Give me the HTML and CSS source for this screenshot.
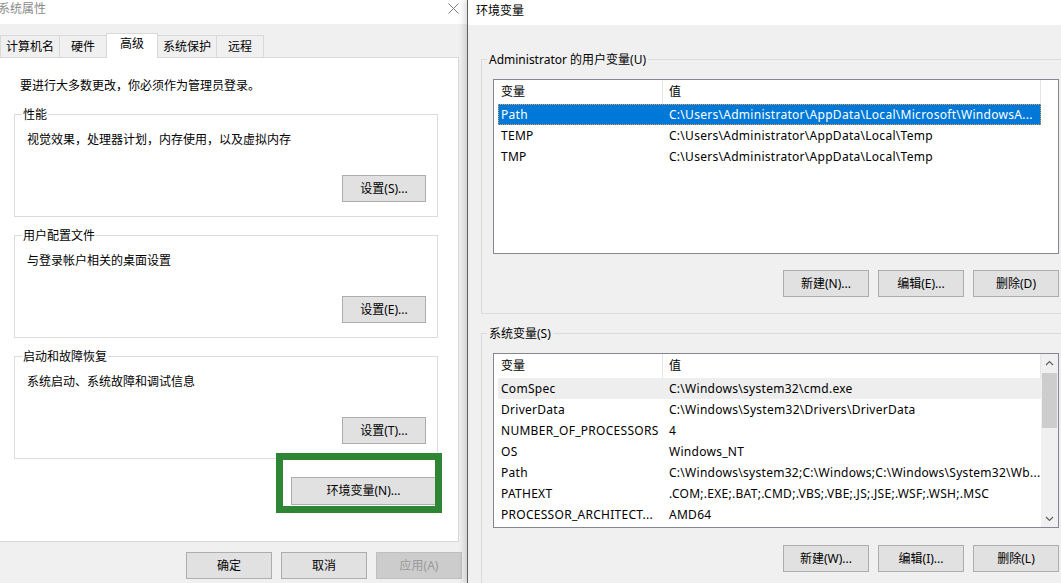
FILE: index.html
```html
<!DOCTYPE html>
<html lang="zh-CN">
<head>
    <meta charset="UTF-8">
    <meta name="viewport" content="width=device-width, initial-scale=1.0">
    <title>系统属性 - 环境变量</title>
    <link rel="stylesheet" href="styles.css">
</head>
<body>
    <div class="desk">
        <!-- 系统属性（后面的窗口） -->
        <div class="dlg-sys">
            <div class="titlebar">
                <span class="title inactive">系统属性</span>
                <svg class="close" width="11" height="11" viewBox="0 0 11 11">
                    <path d="M0.5 0.5 L10.5 10.5 M10.5 0.5 L0.5 10.5" stroke="#7a7a7a" stroke-width="1" fill="none"/>
                </svg>
            </div>

            <div class="tabs">
                <div class="tab">计算机名</div>
                <div class="tab">硬件</div>
                <div class="tab active">高级</div>
                <div class="tab">系统保护</div>
                <div class="tab">远程</div>
            </div>

            <div class="panel">
                <p class="note">要进行大多数更改，你必须作为管理员登录。</p>

                <fieldset class="group">
                    <legend>性能</legend>
                    <p class="desc">视觉效果，处理器计划，内存使用，以及虚拟内存</p>
                    <div class="actions"><button class="btn btn-set">设置(S)...</button></div>
                </fieldset>

                <fieldset class="group">
                    <legend>用户配置文件</legend>
                    <p class="desc">与登录帐户相关的桌面设置</p>
                    <div class="actions"><button class="btn btn-set">设置(E)...</button></div>
                </fieldset>

                <fieldset class="group">
                    <legend>启动和故障恢复</legend>
                    <p class="desc">系统启动、系统故障和调试信息</p>
                    <div class="actions"><button class="btn btn-set">设置(T)...</button></div>
                </fieldset>

                <div class="env-row"><button class="btn btn-env">环境变量(N)...</button></div>
                <div class="mark"></div>
            </div>

            <div class="footer">
                <button class="btn">确定</button>
                <button class="btn">取消</button>
                <button class="btn" disabled>应用(A)</button>
            </div>
        </div>

        <!-- 环境变量（当前窗口） -->
        <div class="dlg-env">
            <div class="titlebar-env">环境变量</div>

            <div class="env-body">
                <fieldset class="env-group user">
                    <legend>Administrator 的用户变量(U)</legend>
                    <div class="list user-list">
                        <div class="list-main">
                            <div class="head">
                                <div class="cell c1">变量</div>
                                <div class="cell c2">值</div>
                            </div>
                            <div class="row selected">
                                <div class="cell c1">Path</div>
                                <div class="cell c2">C:\Users\Administrator\AppData\Local\Microsoft\WindowsA...</div>
                            </div>
                            <div class="row">
                                <div class="cell c1">TEMP</div>
                                <div class="cell c2">C:\Users\Administrator\AppData\Local\Temp</div>
                            </div>
                            <div class="row">
                                <div class="cell c1">TMP</div>
                                <div class="cell c2">C:\Users\Administrator\AppData\Local\Temp</div>
                            </div>
                        </div>
                    </div>
                    <div class="list-actions">
                        <button class="btn">新建(N)...</button>
                        <button class="btn">编辑(E)...</button>
                        <button class="btn">删除(D)</button>
                    </div>
                </fieldset>

                <fieldset class="env-group system">
                    <legend>系统变量(S)</legend>
                    <div class="list sys-list">
                        <div class="list-main">
                            <div class="head">
                                <div class="cell c1">变量</div>
                                <div class="cell c2">值</div>
                            </div>
                            <div class="row hover">
                                <div class="cell c1">ComSpec</div>
                                <div class="cell c2">C:\Windows\system32\cmd.exe</div>
                            </div>
                            <div class="row">
                                <div class="cell c1">DriverData</div>
                                <div class="cell c2">C:\Windows\System32\Drivers\DriverData</div>
                            </div>
                            <div class="row">
                                <div class="cell c1">NUMBER_OF_PROCESSORS</div>
                                <div class="cell c2">4</div>
                            </div>
                            <div class="row">
                                <div class="cell c1">OS</div>
                                <div class="cell c2">Windows_NT</div>
                            </div>
                            <div class="row">
                                <div class="cell c1">Path</div>
                                <div class="cell c2">C:\Windows\system32;C:\Windows;C:\Windows\System32\Wb...</div>
                            </div>
                            <div class="row">
                                <div class="cell c1">PATHEXT</div>
                                <div class="cell c2">.COM;.EXE;.BAT;.CMD;.VBS;.VBE;.JS;.JSE;.WSF;.WSH;.MSC</div>
                            </div>
                            <div class="row">
                                <div class="cell c1">PROCESSOR_ARCHITECT...</div>
                                <div class="cell c2">AMD64</div>
                            </div>
                        </div>
                        <div class="scrollbar">
                            <div class="arrow">
                                <svg width="9" height="6" viewBox="0 0 9 6"><path d="M1 5 L4.5 1.5 L8 5" stroke="#606060" stroke-width="1.2" fill="none"/></svg>
                            </div>
                            <div class="thumb"></div>
                            <div class="track"></div>
                            <div class="arrow">
                                <svg width="9" height="6" viewBox="0 0 9 6"><path d="M1 1 L4.5 4.5 L8 1" stroke="#606060" stroke-width="1.2" fill="none"/></svg>
                            </div>
                        </div>
                    </div>
                    <div class="list-actions">
                        <button class="btn">新建(W)...</button>
                        <button class="btn">编辑(I)...</button>
                        <button class="btn">删除(L)</button>
                    </div>
                </fieldset>
            </div>
        </div>
    </div>
</body>
</html>
```

FILE: styles.css
```css
* { margin: 0; padding: 0; box-sizing: border-box; }
body {
    width: 1061px;
    height: 583px;
    overflow: hidden;
    background: #f0f0f0;
    font-family: "Noto Sans", "Noto Sans CJK SC", sans-serif;
    font-size: 12px;
    color: #000;
}
.desk { display: flex; height: 583px; }

/* buttons */
.btn {
    height: 27px;
    border: 1px solid #adadad;
    background: #e1e1e1;
    font: inherit;
    color: #000;
    line-height: 25px;
    text-align: center;
}
.btn:disabled {
    background: #cccccc;
    border-color: #bfbfbf;
    color: #9a9a9a;
}

/* ---- 系统属性 ---- */
.dlg-sys { width: 467px; flex: none; background: #f0f0f0; }
.titlebar {
    height: 24px;
    background: #fff;
    display: flex;
    align-items: flex-start;
}
.title { margin-left: -2px; padding-top: 1px; line-height: 16px; }
.title.inactive { color: #8a8a8a; }
.close { margin: 3px 8px 0 auto; }

.tabs {
    display: flex;
    align-items: flex-end;
    height: 24px;
    margin-top: 9px;
}
.tab {
    height: 22px;
    min-width: 48px;
    padding: 0 5px;
    margin-right: -1px;
    border: 1px solid #d9d9d9;
    border-bottom: none;
    background: #f0f0f0;
    line-height: 21px;
    text-align: center;
}
.tab.active {
    position: relative;
    z-index: 1;
    height: 25px;
    min-width: 52px;
    margin-bottom: -1px;
    background: #fff;
    line-height: 19px;
}

.panel {
    position: relative;
    width: 459px;
    height: 485px;
    background: #fff;
    border: 1px solid #d9d9d9;
    border-left: none;
    padding-top: 20px;
}
.note { padding-left: 20px; line-height: 16px; }

.group {
    min-width: 0;
    width: 424px;
    margin: 11px 0 0 14px;
    border: 1px solid #dcdcdc;
    padding: 10px 11px 14px 7px;
}
.note + .group { margin-top: 13px; }
.group legend { padding: 0 1px; line-height: 15px; }
.desc { padding-left: 5px; line-height: 16px; }
.actions { display: flex; justify-content: flex-end; margin-top: 27px; }
.btn-set { width: 84px; }

.env-row { display: flex; justify-content: flex-end; margin: 18px 22px 0 0; }
.btn-env { width: 145px; height: 28px; line-height: 26px; }

/* 绿色标注框 */
.mark {
    position: absolute;
    left: 276px;
    top: 395px;
    width: 166px;
    height: 60px;
    border: 7px solid #2e8534;
}

.footer {
    display: flex;
    justify-content: flex-end;
    gap: 9px;
    margin-top: 10px;
    padding-right: 5px;
}
.footer .btn { width: 86px; }

/* ---- 环境变量 ---- */
.dlg-env {
    position: relative;
    z-index: 2;
    width: 617px;
    flex: none;
    background: #f0f0f0;
    border-left: 1px solid #5f5f5f;
    box-shadow: -3px 0 6px rgba(0, 0, 0, 0.14);
}
.titlebar-env {
    height: 25px;
    background: #fff;
    padding: 3px 0 0 8px;
    line-height: 16px;
}
.env-body { padding: 0 13px; }
.env-group {
    min-width: 0;
    border: 1px solid #dcdcdc;
    padding: 12px 11px 16px 11px;
}
.env-group.user { margin-top: 27px; }
.env-group.system { margin-top: 12px; }
.env-group legend { margin-left: -6px; padding: 0 2px; line-height: 15px; }

.list {
    display: flex;
    width: 566px;
    height: 175px;
    background: #fff;
    border: 1px solid #828790;
    overflow: hidden;
}
.list-main { flex: 1; padding-left: 4px; }
.head, .row { display: flex; width: 543px; }
.head { height: 24px; line-height: 23px; }
.head .cell { border-right: 1px solid #e5e5e5; }
.row { height: 21px; line-height: 21px; letter-spacing: 0.28px; }
.cell { white-space: nowrap; overflow: hidden; }
.c1 { width: 165px; padding-left: 3px; }
.c2 { width: 378px; padding-left: 6px; }
.row.selected { background: #0078d7; color: #fff; outline: 1px dotted #e0a050; outline-offset: -1px; }
.row.hover { background: #eeeeee; }

.scrollbar {
    width: 17px;
    flex: none;
    background: #f0f0f0;
    display: flex;
    flex-direction: column;
}
.arrow { height: 17px; display: flex; align-items: center; justify-content: center; }
.thumb { height: 55px; margin: 2px 1px 0; background: #cdcdcd; }
.track { flex: 1; }

.list-actions {
    display: flex;
    justify-content: flex-end;
    gap: 9px;
    margin-top: 16px;
}
.system .list-actions { margin-top: 17px; }
.list-actions .btn { width: 86px; }
```
